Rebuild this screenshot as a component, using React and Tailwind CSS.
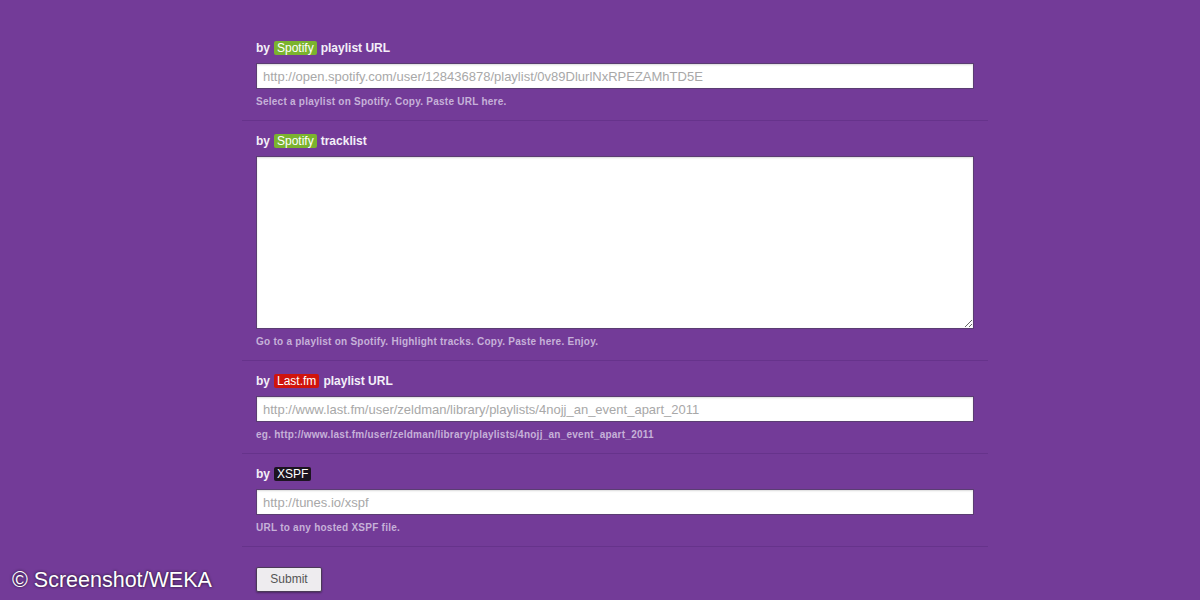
import React from 'react';

const Badge = ({ children, color }) => (
  <span className={`inline-flex h-[14px] items-center rounded-[2px] px-[3px] text-[12px] font-normal leading-none text-white ${color}`}>
    {children}
  </span>
);

const Label = ({ badge, color, rest }) => (
  <div className="flex h-[14px] items-center gap-[4px] text-[12px] font-bold leading-none text-[#f4eff8]">
    <span>by</span>
    <Badge color={color}>{badge}</Badge>
    {rest && <span>{rest}</span>}
  </div>
);

const Help = ({ children }) => (
  <p className="mt-[7px] text-[10px] font-bold leading-[12px] tracking-[0.25px] text-[#c6b1d8]">{children}</p>
);

const TextInput = ({ placeholder }) => (
  <input
    type="text"
    placeholder={placeholder}
    className="mt-[8px] block h-[26px] w-full border border-[#5a3d72] bg-white px-[6px] text-[13px] text-[#333] shadow-[inset_0_1px_2px_rgba(0,0,0,0.15)] outline-none placeholder:text-[#a8a8a8]"
  />
);

const Section = ({ children, first }) => (
  <div className={`px-[14px] pb-[12px] ${first ? 'pt-[14px]' : 'pt-[13px] border-t border-[#66338b]'}`}>
    {children}
  </div>
);

export default function App() {
  return (
    <div className="relative h-[600px] w-[1200px] overflow-hidden bg-[#733b98]" style={{ fontFamily: '"Liberation Sans", Arial, sans-serif' }}>
      <div className="ml-[242px] w-[746px] pt-[27px]">
        <Section first>
          <Label badge="Spotify" color="bg-[#7bb32e]" rest="playlist URL" />
          <TextInput placeholder="http://open.spotify.com/user/128436878/playlist/0v89DlurlNxRPEZAMhTD5E" />
          <Help>Select a playlist on Spotify. Copy. Paste URL here.</Help>
        </Section>

        <Section>
          <Label badge="Spotify" color="bg-[#7bb32e]" rest="tracklist" />
          <textarea className="mt-[8px] block h-[173px] w-full border border-[#5a3d72] bg-white px-[6px] py-[4px] text-[13px] shadow-[inset_0_1px_2px_rgba(0,0,0,0.15)] outline-none" />
          <Help>Go to a playlist on Spotify. Highlight tracks. Copy. Paste here. Enjoy.</Help>
        </Section>

        <Section>
          <Label badge="Last.fm" color="bg-[#d0140c]" rest="playlist URL" />
          <TextInput placeholder="http://www.last.fm/user/zeldman/library/playlists/4nojj_an_event_apart_2011" />
          <Help>eg. http://www.last.fm/user/zeldman/library/playlists/4nojj_an_event_apart_2011</Help>
        </Section>

        <Section>
          <Label badge="XSPF" color="bg-[#1c1420] font-bold" />
          <TextInput placeholder="http://tunes.io/xspf" />
          <Help>URL to any hosted XSPF file.</Help>
        </Section>

        <div className="border-t border-[#66338b] px-[14px] pt-[19px]">
          <button className="h-[25px] w-[66px] rounded-[2px] border border-[#4b3a58] bg-[#eeecef] text-[12px] text-[#555] shadow-[0_1px_2px_rgba(0,0,0,0.35)]">
            Submit
          </button>
        </div>
      </div>

      <div className="absolute left-[12px] top-[566px] text-[21.5px] leading-[28px] text-white [text-shadow:0_0_3px_rgba(0,0,0,0.8)]">
        © Screenshot/WEKA
      </div>
    </div>
  );
}
